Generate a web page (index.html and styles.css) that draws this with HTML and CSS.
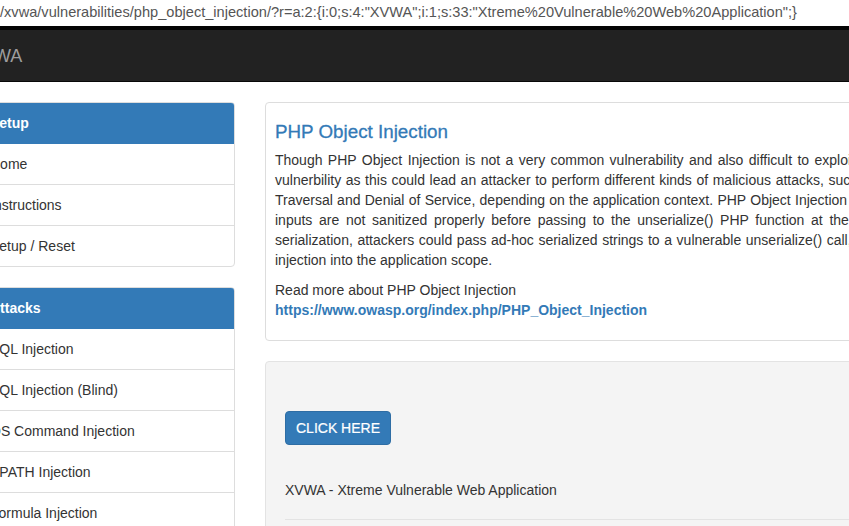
FILE: index.html
```html
<!DOCTYPE html>
<html>
<head>
<meta charset="utf-8">
<link rel="stylesheet" href="styles.css">
</head>
<body>
<div class="urlbar">/xvwa/vulnerabilities/php_object_injection/?r=a:2:{i:0;s:4:"XVWA";i:1;s:33:"Xtreme%20Vulnerable%20Web%20Application";}</div>
<div class="topline"></div>
<nav class="navbar"><span class="brand">XVWA</span></nav>
<div class="page">
  <aside class="sidebar">
    <div class="panel">
      <div class="panel-heading">Setup</div>
      <div class="item">Home</div>
      <div class="item">Instructions</div>
      <div class="item">Setup / Reset</div>
    </div>
    <div class="panel">
      <div class="panel-heading">Attacks</div>
      <div class="item">SQL Injection</div>
      <div class="item">SQL Injection (Blind)</div>
      <div class="item">OS Command Injection</div>
      <div class="item">XPATH Injection</div>
      <div class="item">Formula Injection</div>
    </div>
  </aside>
  <main class="content">
    <section class="card">
      <h4 class="title">PHP Object Injection</h4>
      <p class="desc">
        <span class="ln l1">Though PHP Object Injection is not a very common vulnerability and also difficult to exploit, but it can be really dangerous</span>
        <span class="ln l2">vulnerbility as this could lead an attacker to perform different kinds of malicious attacks, such as Code Injection, SQL Injection, Path</span>
        <span class="ln l3">Traversal and Denial of Service, depending on the application context. PHP Object Injection vulnerability occurs when user-supplied</span>
        <span class="ln l4">inputs are not sanitized properly before passing to the unserialize() PHP function at the server side. Since PHP allows object</span>
        <span class="ln l5">serialization, attackers could pass ad-hoc serialized strings to a vulnerable unserialize() call, resulting in an arbitrary PHP object(s)</span>
        <span class="ln">injection into the application scope.</span>
      </p>
      <p class="more">Read more about PHP Object Injection<br><a class="link" href="#">https://www.owasp.org/index.php/PHP_Object_Injection</a></p>
    </section>
    <section class="well">
      <button class="btn">CLICK HERE</button>
      <p class="app">XVWA - Xtreme Vulnerable Web Application</p>
      <hr class="rule">
    </section>
  </main>
</div>
</body>
</html>
```
FILE: styles.css
```css
html, body {
  margin: 0;
  padding: 0;
  background: #fff;
  overflow: hidden;
  height: 526px;
}
body {
  font-family: "Liberation Sans", Arial, sans-serif;
  font-size: 14px;
  line-height: 20px;
  color: #333;
}
.urlbar {
  height: 26px;
  line-height: 25px;
  font-size: 14.6px;
  color: #555;
  white-space: nowrap;
  background: #fff;
}
.topline {
  height: 4px;
  background: #050505;
}
.navbar {
  height: 52px;
  background: #222;
  border-bottom: 1px solid #080808;
  box-sizing: border-box;
  overflow: hidden;
  white-space: nowrap;
}
.brand {
  display: block;
  margin-left: -30px;
  font-size: 18px;
  line-height: 53px;
  color: #9d9d9d;
}
.page {
  display: flex;
  gap: 30px;
  margin-left: -26px;
  margin-top: 20px;
  width: 1200px;
}
.sidebar {
  width: 261px;
  flex: none;
}
.panel {
  border: 1px solid #ddd;
  border-radius: 4px;
  margin-bottom: 20px;
  background: #fff;
  overflow: hidden;
}
.panel-heading {
  background: #337ab7;
  color: #fff;
  font-weight: bold;
  padding: 10px 15px;
  height: 20px;
  margin: -1px -1px 0 -1px;
  border: 1px solid #337ab7;
  border-bottom: none;
  border-radius: 4px 4px 0 0;
}
.item {
  padding: 10px 15px;
  border-top: 1px solid #ddd;
  color: #333;
}
.panel-heading + .item {
  border-top: 1px solid #337ab7;
}
.content {
  width: 860px;
  flex: none;
}
.card {
  border: 1px solid #ddd;
  border-radius: 4px;
  padding: 19px 9px 20px 9px;
  background: #fff;
}
.title {
  margin: 0 0 8px 0;
  font-size: 18.8px;
  line-height: 20px;
  font-weight: normal;
  color: #337ab7;
  -webkit-text-stroke: 0.3px #337ab7;
}
.desc {
  margin: 0 0 10px 0;
}
.ln {
  display: block;
  white-space: nowrap;
}
.l1 { word-spacing: 1.5px; }
.l2 { word-spacing: 0.7px; }
.l3 { word-spacing: 0.4px; }
.l4 { word-spacing: 2.8px; }
.l5 { word-spacing: 0.7px; }
.more {
  margin: 0;
}
.link {
  color: #337ab7;
  font-weight: bold;
  text-decoration: none;
}
.well {
  margin-top: 20px;
  background: #f4f4f4;
  border: 1px solid #e3e3e3;
  border-radius: 4px;
  padding: 49px 19px 0 19px;
  height: 200px;
}
.btn {
  display: block;
  font-family: "Liberation Sans", Arial, sans-serif;
  font-size: 14px;
  line-height: 20px;
  color: #fff;
  background: #337ab7;
  border: 1px solid #2e6da4;
  border-radius: 4px;
  padding: 6px 10px;
  -webkit-text-stroke: 0.2px #fff;
}
.app {
  margin: 35px 0 0 0;
}
.rule {
  margin: 19px 0 0 0;
  border: 0;
  border-top: 1px solid #e3e3e3;
}
```
